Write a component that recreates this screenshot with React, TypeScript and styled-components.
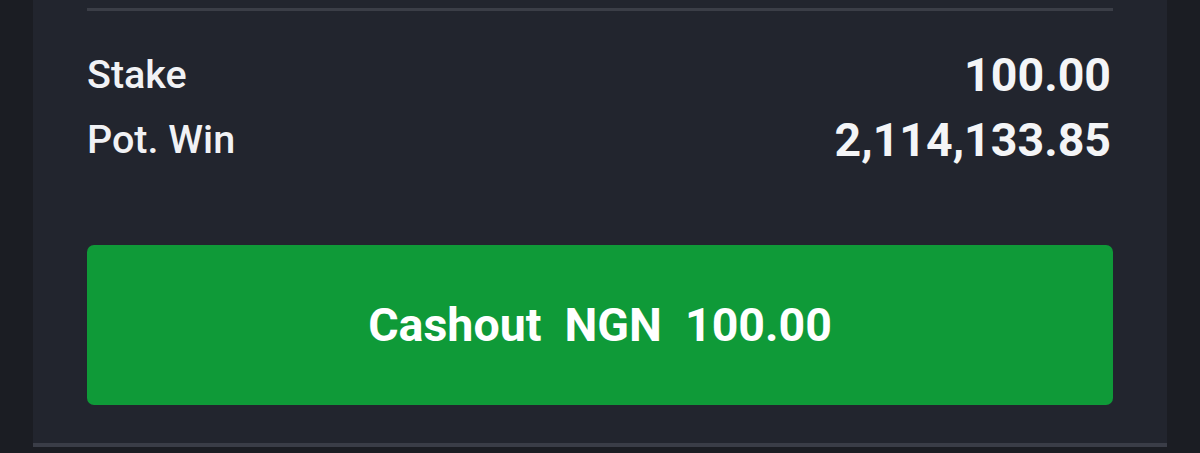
import React from "react";
import styled, { createGlobalStyle } from "styled-components";

const Global = createGlobalStyle`
  html, body { margin: 0; padding: 0; background: #1b1d23; }
  body { font-family: Roboto, "Noto Sans", sans-serif; -webkit-font-smoothing: antialiased; }
`;

const Page = styled.div`
  width: 1200px;
  height: 453px;
  overflow: hidden;
  background: #1b1d23;
`;

const Panel = styled.section`
  margin: 0 33px;
  height: 447px;
  background: #22252e;
  border-bottom: 4px solid #3a3d47;
  padding: 8px 54px 0;
  box-sizing: border-box;
  display: flex;
  flex-direction: column;
`;

const Divider = styled.div`
  height: 3px;
  background: #3b3e47;
`;

const Summary = styled.div`
  display: flex;
  flex-direction: column;
  gap: 13px;
  padding-top: 38px;
`;

const Row = styled.div`
  display: flex;
  justify-content: space-between;
  align-items: center;
  height: 52px;
`;

const Label = styled.span`
  font-size: 39.5px;
  font-weight: 500;
  color: #f1f2f5;
  line-height: 52px;
`;

const Value = styled.span`
  font-size: 46.5px;
  font-weight: 700;
  color: #f4f5f7;
  line-height: 52px;
  margin-right: 2px;
`;

const CashoutButton = styled.button`
  margin-top: 79px;
  height: 160px;
  border: none;
  border-radius: 7px;
  background: #0f9a38;
  color: #ffffff;
  font-family: Roboto, "Noto Sans", sans-serif;
  font-size: 46.5px;
  font-weight: 700;
  white-space: pre;
  display: flex;
  align-items: center;
  justify-content: center;
  cursor: pointer;
`;

export default function App() {
  return (
    <Page>
      <Global />
      <Panel>
        <Divider />
        <Summary>
          <Row>
            <Label>Stake</Label>
            <Value>100.00</Value>
          </Row>
          <Row>
            <Label>Pot. Win</Label>
            <Value>2,114,133.85</Value>
          </Row>
        </Summary>
        <CashoutButton>{"Cashout  NGN  100.00"}</CashoutButton>
      </Panel>
    </Page>
  );
}
